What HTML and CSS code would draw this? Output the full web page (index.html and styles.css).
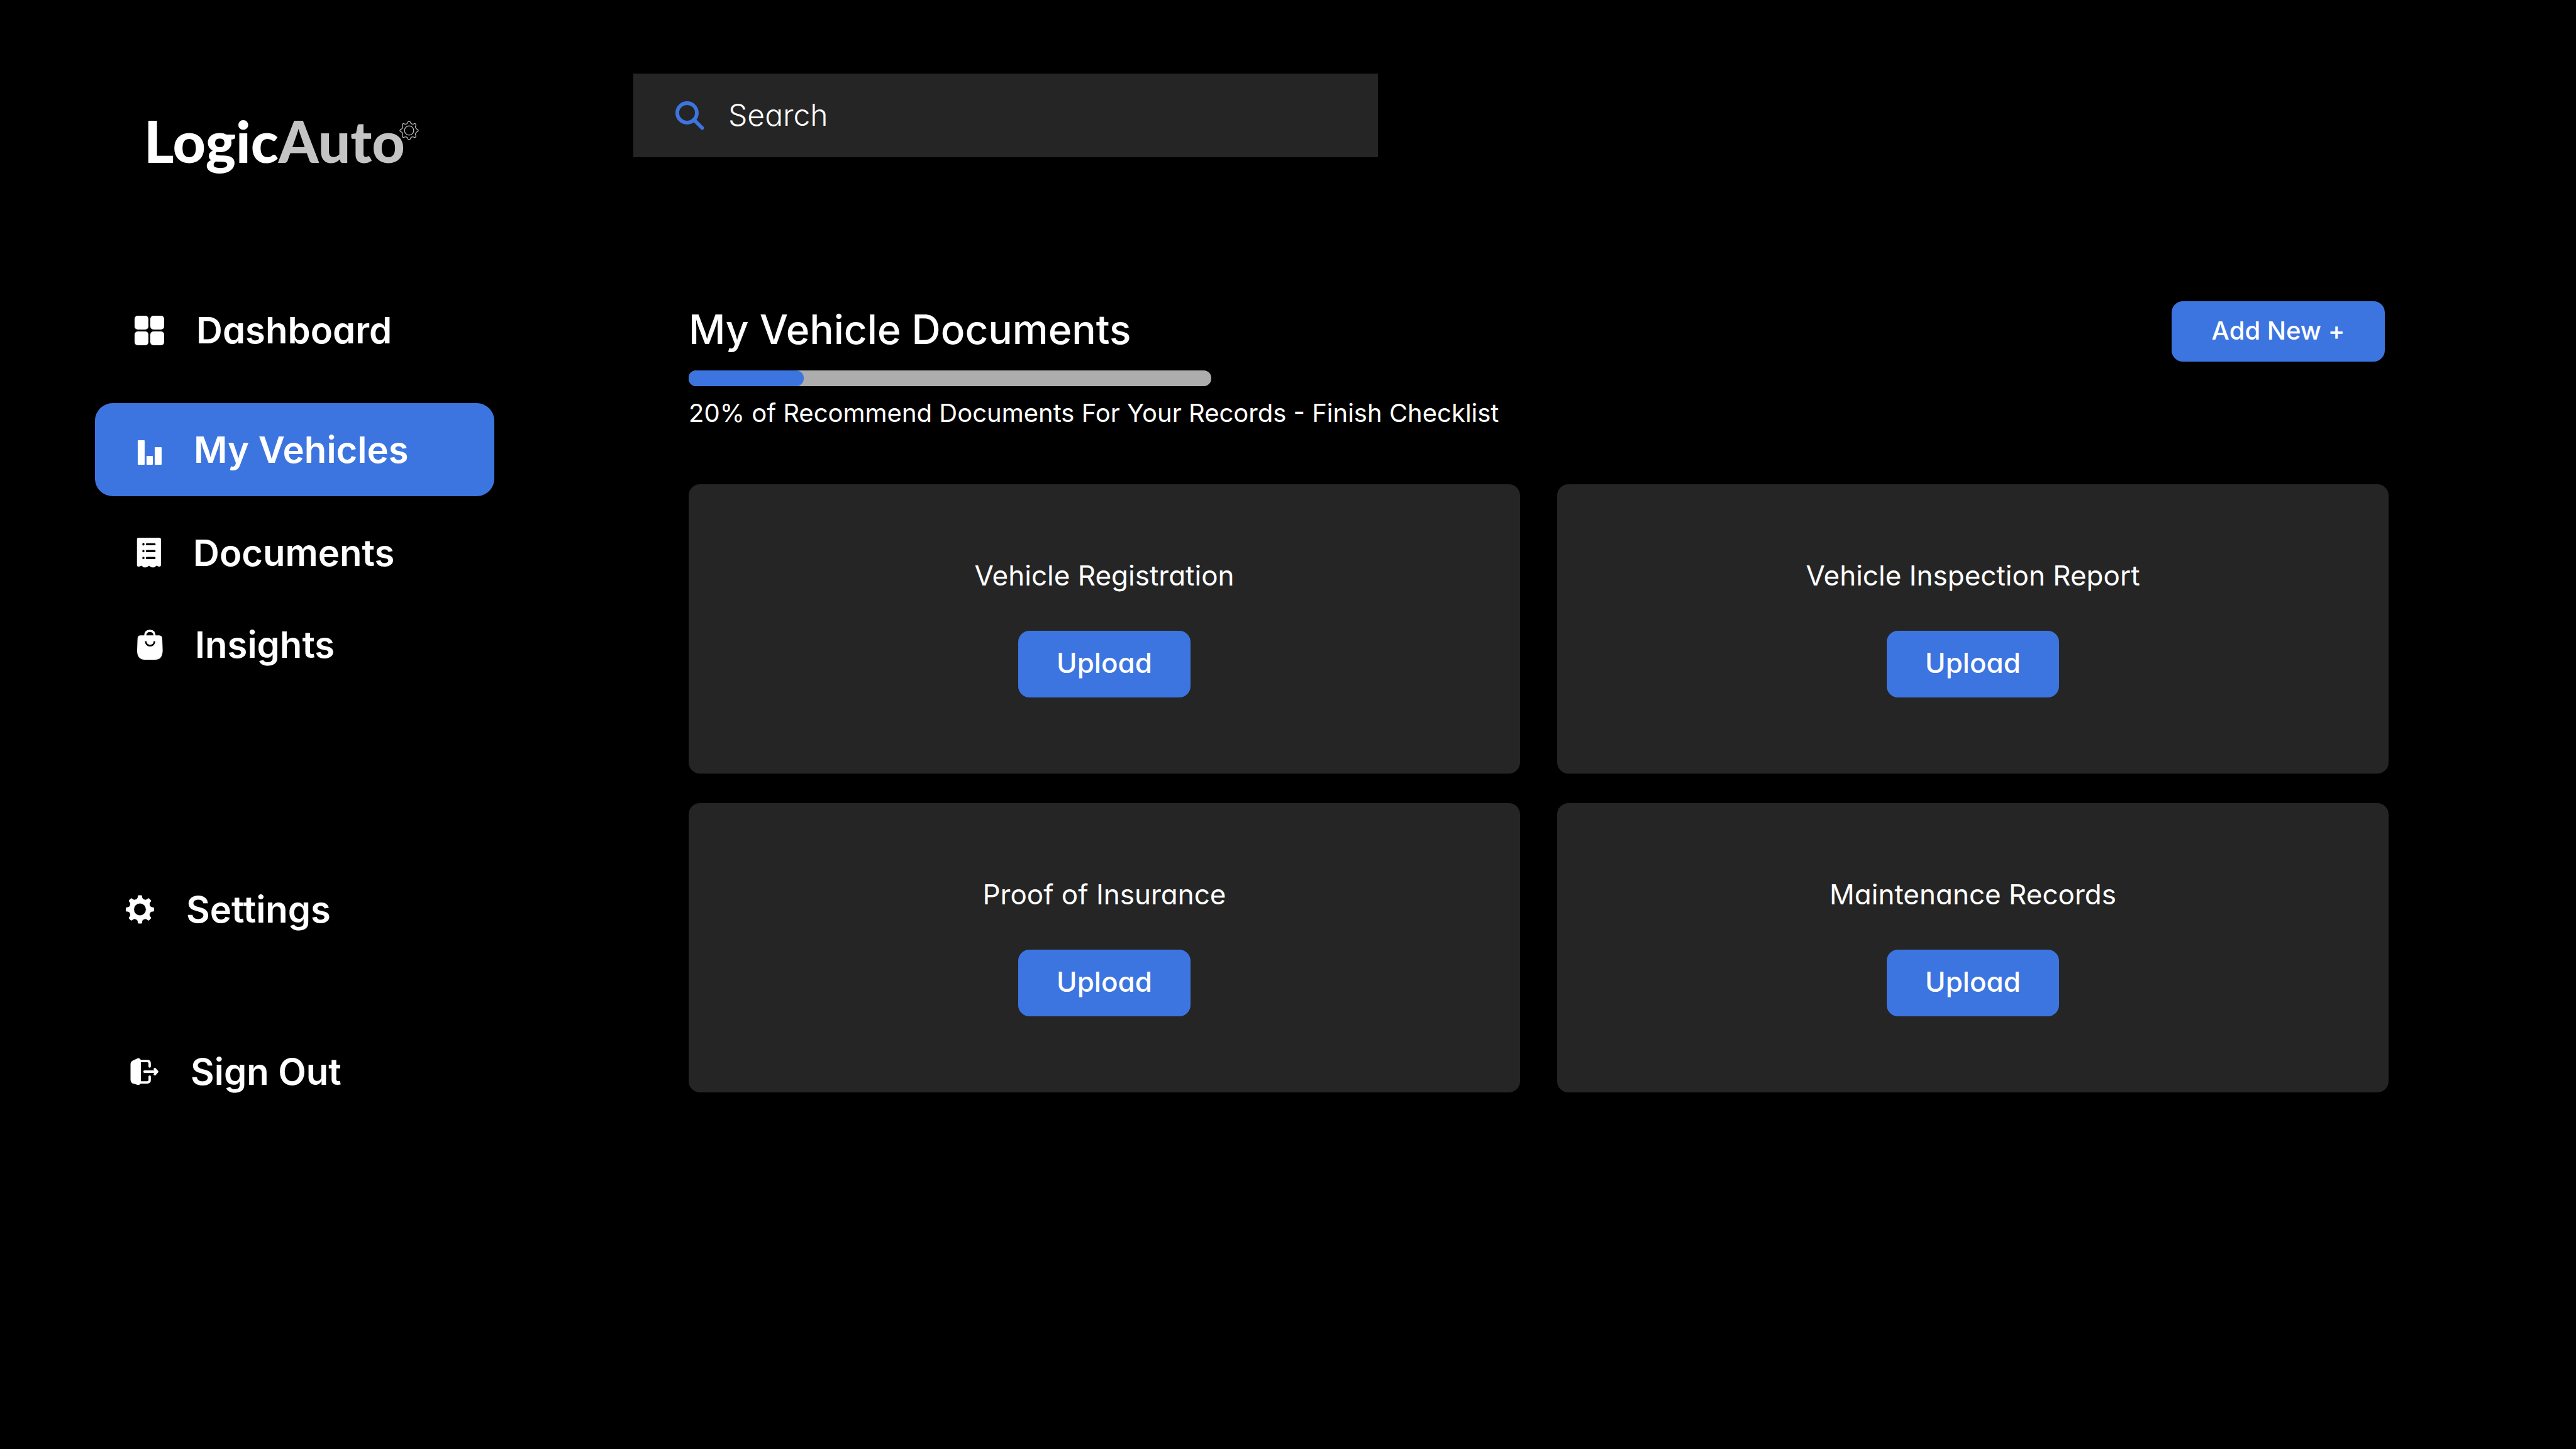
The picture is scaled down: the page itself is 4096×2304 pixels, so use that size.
FILE: index.html
```html
<!DOCTYPE html>
<html lang="en">
<head>
<meta charset="utf-8">
<meta name="viewport" content="width=device-width, initial-scale=1">
<title>LogicAuto - My Vehicle Documents</title>
<link rel="stylesheet" href="styles.css">
</head>
<body>
<div class="app">
  <aside class="sidebar">
    <a class="logo" href="#"><span>Logic</span><span class="logo-accent">Auto</span><svg class="logo-gear" viewBox="-51 -51 102 102" aria-hidden="true"><defs><path id="gear-edge" d="M-13 -35Q-8 -37 -7 -42Q-6 -48 0 -48Q6 -48 7 -42Q8 -37 13 -35L15.6 -33.9Q20.5 -31.8 24.7 -34.6Q29.7 -38.2 33.9 -33.9Q38.2 -29.7 34.6 -24.7Q31.8 -20.5 33.9 -15.6L35 -13"/></defs><g fill="none" stroke="#c4c4c4" stroke-width="4"><use href="#gear-edge"/><use href="#gear-edge" transform="rotate(90)"/><use href="#gear-edge" transform="rotate(180)"/><use href="#gear-edge" transform="rotate(270)"/><circle r="24"/></g></svg></a>
    <nav class="nav" aria-label="Main">
      <a class="nav-link" href="#">
        <svg class="icon-dashboard" viewBox="0 0 48 48" aria-hidden="true"><rect x="1" y="1" width="22" height="22" rx="5"/><rect x="26" y="1" width="22" height="22" rx="5"/><rect x="1" y="26" width="22" height="22" rx="5"/><rect x="26" y="26" width="22" height="22" rx="5"/></svg>
        Dashboard
      </a>
      <a class="nav-link active" href="#" aria-current="page">
        <svg class="icon-vehicles" viewBox="0 0 44 48" aria-hidden="true"><rect x="6" y="9" width="11" height="39" rx="1"/><rect x="20" y="34" width="10" height="14" rx="1"/><rect x="33" y="20" width="11" height="28" rx="1"/></svg>
        My Vehicles
      </a>
      <a class="nav-link" href="#">
        <svg class="icon-documents" viewBox="-7 0 63 70" aria-hidden="true"><path d="M4 0H52Q56 0 56 4V64Q55 68 50 67L45 65Q41 70 37 69Q32 69 28 65Q24 69 19 69Q15 70 11 65L6 67Q0 68 0 64V4Q0 0 4 0Z"/><g stroke="#000" stroke-width="5" stroke-linecap="round"><path d="M23 15H41M23 31H41M23 47H41M15 14.500V15.500M15 30.500V31.500M15 46.500V47.500"/></g></svg>
        Documents
      </a>
      <a class="nav-link" href="#">
        <svg class="icon-insights" viewBox="-7 0 68 72" aria-hidden="true"><path d="M9 14H52Q60 14 60 22L61 50Q61 72 43 72H18Q0 72 0 50L1 22Q1 14 9 14Z"/><path d="M19 17Q19 3 30.500 3Q42 3 42 17" fill="none" stroke="#fff" stroke-width="5"/><path d="M20.500 28C21 42 41 42 41.500 28" fill="none" stroke="#000" stroke-width="4"/></svg>
        Insights
      </a>
    </nav>
    <nav class="nav nav-account" aria-label="Account">
      <a class="nav-link" href="#">
        <svg class="icon-settings" viewBox="-50 -50 100 100" aria-hidden="true"><defs><path id="cog-tooth" d="M-18 -33Q-9 -37 -8 -42L-7.500 -47Q-7 -50 -4 -50H4Q7 -50 7.500 -47L8 -42Q9 -37 18 -33Z"/></defs><circle r="29" fill="none" stroke="#fff" stroke-width="16"/><use href="#cog-tooth"/><use href="#cog-tooth" transform="rotate(45)"/><use href="#cog-tooth" transform="rotate(90)"/><use href="#cog-tooth" transform="rotate(135)"/><use href="#cog-tooth" transform="rotate(180)"/><use href="#cog-tooth" transform="rotate(225)"/><use href="#cog-tooth" transform="rotate(270)"/><use href="#cog-tooth" transform="rotate(315)"/></svg>
        Settings
      </a>
      <a class="nav-link" href="#">
        <svg class="icon-signout" viewBox="-11 0 76 63" aria-hidden="true"><path d="M0 14Q0 9 5 6L15 1Q21 -2 24 4V59Q21 64 15 62L4 58.500Q0 56 0 51Z"/><path d="M22 7H39Q44.500 7 44.500 12V19.500M44.500 43V51Q44.500 56.500 39 56.500H22M32.500 31.500H60M56.500 25.500L62 31.500L56.500 37.500" fill="none" stroke="#fff" stroke-width="5.500" stroke-linecap="round" stroke-linejoin="round"/></svg>
        Sign Out
      </a>
    </nav>
  </aside>
  <main class="main">
    <form class="search" role="search">
      <label for="search"><svg class="icon-search" viewBox="0 0 66 66" role="img" aria-label="Search"><g fill="none" stroke="#3d75e0" stroke-width="8.500"><circle cx="26.500" cy="26.500" r="22.300"/><path d="M42 42L61 61" stroke-linecap="round"/></g></svg></label>
      <input id="search" type="search" placeholder="Search">
    </form>
    <section class="documents">
      <header class="documents-head">
        <div>
          <h1>My Vehicle Documents</h1>
          <div class="progress" role="progressbar" aria-label="Recommended documents" aria-valuemin="0" aria-valuemax="100" aria-valuenow="20"><div class="progress-fill" style="width: 22%"></div></div>
          <p class="progress-note">20% of Recommend Documents For Your Records - Finish Checklist</p>
        </div>
        <button class="button button-add" type="button">Add New +</button>
      </header>
      <div class="cards">
        <article class="card"><h2>Vehicle Registration</h2><button class="button" type="button">Upload</button></article>
        <article class="card"><h2>Vehicle Inspection Report</h2><button class="button" type="button">Upload</button></article>
        <article class="card"><h2>Proof of Insurance</h2><button class="button" type="button">Upload</button></article>
        <article class="card"><h2>Maintenance Records</h2><button class="button" type="button">Upload</button></article>
      </div>
    </section>
  </main>
</div>
</body>
</html>
```
FILE: styles.css
```css
* {
  box-sizing: border-box;
}

body {
  margin: 0;
  background: #000;
  color: #fff;
  font-family: Inter, "Liberation Sans", sans-serif;
  font-feature-settings: "cv11";
}

h1,
h2,
p {
  margin: 0;
}

button,
input {
  font-family: inherit;
  font-feature-settings: inherit;
  color: inherit;
}

.app {
  display: flex;
  min-height: 100vh;
}

/* Sidebar */

.sidebar {
  flex: none;
  width: 1007px;
  padding: 164px 221px 0 151px;
}

.logo {
  position: relative;
  display: inline-flex;
  margin-left: 78px;
  color: #fff;
  font-family: Lato, "Liberation Sans", sans-serif;
  font-size: 91px;
  font-weight: 900;
  line-height: 120px;
  text-decoration: none;
}

.logo-accent {
  color: #c4c4c4;
}

.logo-gear {
  position: absolute;
  top: 28px;
  right: -22px;
  width: 31px;
  height: 31px;
}

.nav {
  display: flex;
  flex-direction: column;
  gap: 34px;
  margin-top: 185px;
}

.nav-link {
  display: flex;
  align-items: center;
  gap: 51px;
  height: 112px;
  padding-left: 62px;
  border-radius: 28px;
  color: #fff;
  font-size: 58px;
  font-weight: 600;
  text-decoration: none;
}

.nav-link svg {
  flex: none;
  height: 48px;
  fill: #fff;
}

.nav-link.active {
  height: 148px;
  margin-top: 26px;
  background: #3d75e0;
}

.nav-account {
  gap: 146px;
  margin-top: 309px;
}

.nav-account .nav-link {
  padding-left: 49px;
}

.nav-link .icon-dashboard {
  width: 48px;
}

.nav-link .icon-vehicles {
  width: 44px;
}

.nav-link .icon-documents {
  width: 43px;
}

.nav-link .icon-insights {
  width: 46px;
}

.nav-link .icon-settings {
  width: 45px;
}

.nav-link .icon-signout {
  width: 52px;
}

/* Main column */

.main {
  flex: 1;
  padding: 117px 298px 117px 0;
}

.search {
  display: flex;
  align-items: center;
  gap: 38px;
  max-width: 1184px;
  height: 133px;
  padding: 0 67px;
  background: #252525;
}

.icon-search {
  display: block;
  width: 46px;
  height: 46px;
}

.search input {
  flex: 1;
  min-width: 0;
  padding: 0 0 2px;
  border: 0;
  outline: 0;
  background: none;
  font-size: 48px;
  font-weight: 300;
}

.search input::placeholder {
  color: #fff;
  opacity: 1;
}

.documents {
  margin-top: 229px;
  padding-left: 88px;
}

.documents-head {
  display: flex;
  align-items: flex-start;
  justify-content: space-between;
  padding-right: 6px;
}

h1 {
  font-size: 64px;
  font-weight: 500;
  line-height: 90px;
}

.progress {
  width: 831px;
  height: 25px;
  margin-top: 20px;
  border-radius: 12px;
  background: #adadad;
}

.progress-fill {
  height: 100%;
  border-radius: 12px;
  background: #3d75e0;
}

.progress-note {
  margin-top: 15px;
  font-size: 40px;
  line-height: 56px;
}

.button {
  width: 274px;
  height: 106px;
  padding: 0 0 4px;
  border: 0;
  border-radius: 18px;
  background: #3d75e0;
  font-size: 44px;
  font-weight: 500;
}

.button-add {
  width: 339px;
  height: 96px;
  font-size: 40px;
}

.cards {
  display: grid;
  grid-template-columns: 1fr 1fr;
  gap: 47px 59px;
  margin-top: 85px;
}

.card {
  display: flex;
  flex-direction: column;
  align-items: center;
  gap: 58px;
  min-height: 460px;
  padding: 115px 40px;
  border-radius: 18px;
  background: #252525;
}

h2 {
  font-size: 44px;
  font-weight: 400;
  line-height: 60px;
}
```
